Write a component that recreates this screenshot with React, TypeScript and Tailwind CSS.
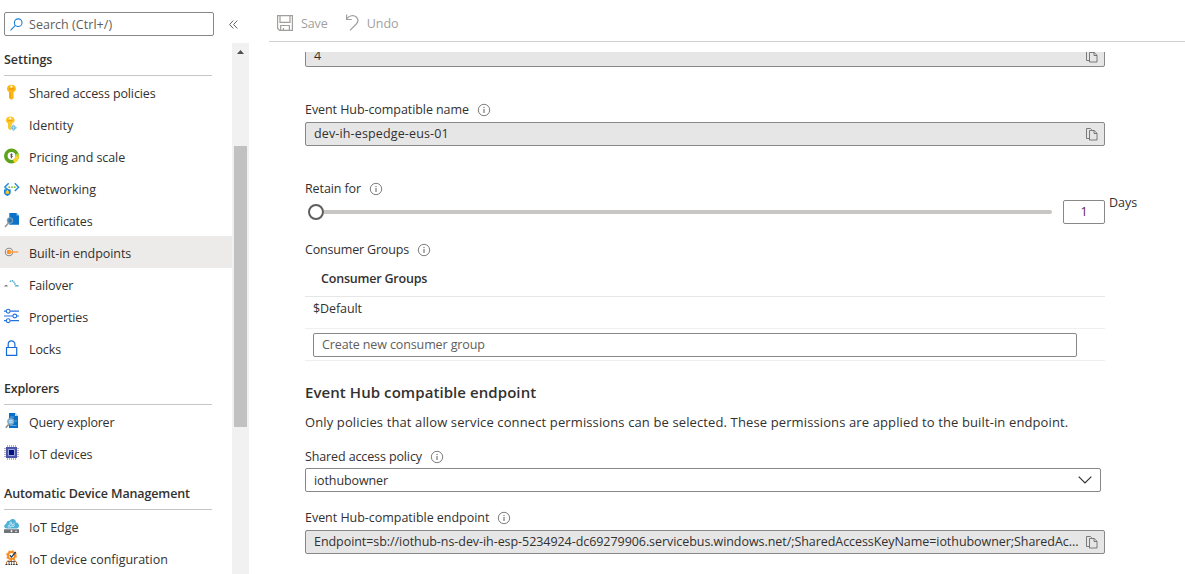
import React from "react";

type IconProps = { children: React.ReactNode };

function Glyph({ children }: IconProps) {
  return (
    <svg viewBox="0 0 16 16" className="h-4 w-4 shrink-0" fill="none">
      {children}
    </svg>
  );
}

const KeyIcon = () => (
  <Glyph>
    <path d="M7.500.8C4.900.8 3 2.300 3 4.700c0 1.500.8 2.500 2.200 3.300v5.900l1.900 1.900h.8l1.700-1.700V8C11 7.200 11.900 6.200 11.900 4.700 11.900 2.300 10 .8 7.500.8Z" fill="#fdb714" />
    <path d="M5.200 8h1.600v7L5.200 13.900Z" fill="#f7a30c" />
    <rect x="4.800" y="4.500" width="5.400" height="1" rx=".5" fill="#f08c00" />
    <circle cx="7.400" cy="2.700" r="1.100" fill="#fff" />
  </Glyph>
);

const IdentityIcon = () => (
  <Glyph>
    <path d="M6.200.5C3.700.5 1.800 2 1.800 4.200c0 1.400.8 2.400 2.200 3v5l1.700 1.800h.8l1.700-1.600-.8-1 .8-1-.8-1 .8-1V7.200c1.600-.7 2.500-1.600 2.500-3C10.700 2 8.600.5 6.200.5Z" fill="#fcc72c" />
    <circle cx="6.200" cy="2.500" r="1" fill="#fff" />
    <rect x="3.800" y="4.200" width="4.800" height=".9" fill="#e89b10" />
    <path d="M9.500 8.200 13.200 11.700 9.500 15.300 5.900 11.700Z" fill="#9ad6ee" />
    <path d="m9.500 9.400 2.400 2.300-2.400 2.300-2.300-2.300Z" fill="#5ba9cf" />
    <path d="M9.500 9.800v4M7.600 11.700h3.900" stroke="#cdebf7" strokeWidth=".6" />
  </Glyph>
);

const PricingIcon = () => (
  <Glyph>
    <circle cx="7.500" cy="8" r="5.700" stroke="#5ea31d" strokeWidth="3.600" />
    <path d="M12.700 5.700A5.700 5.700 0 0 1 13.200 8" stroke="#b4d53a" strokeWidth="3.600" />
    <path d="M13.200 8a5.700 5.700 0 0 1-3.600 5.300" stroke="#f9d42c" strokeWidth="3.600" />
    <path d="M8.600 6.600c-.5-.6-2.100-.6-2.100.3s2 .6 2 1.500-1.600 1-2.200.3M7.500 5.600v4.800" stroke="#444" strokeWidth=".8" />
  </Glyph>
);

const NetworkingIcon = () => (
  <Glyph>
    <path d="M4.700 3.300.8 7.100l2.500 2.500M10.800 3.300l3.800 3.900-3.800 3.900" stroke="#2f8fe0" strokeWidth="1.500" />
    <circle cx="5.200" cy="7.200" r=".9" fill="#76bc2d" />
    <circle cx="8" cy="7.200" r=".9" fill="#76bc2d" />
    <circle cx="10.800" cy="7.200" r=".9" fill="#76bc2d" />
    <path d="M0 9.500q2 0 3.300-1 1.300 1 3.400 1v3q0 2.300-3.400 3.500Q0 14.800 0 12.500Z" fill="#1685da" />
    <path d="M1.700 11.300h3.400v2.500H1.700ZM2.500 11.300v-1q.9-1.300 1.700 0v1" fill="#ffca2b" />
  </Glyph>
);

const CertificateIcon = () => (
  <Glyph>
    <path d="M5.300 1h7.200L15 3.500V12.800H5.300Z" fill="#0a72c8" />
    <path d="M12.500 1v2.500H15Z" fill="#7fc0ee" />
    <path d="m1 15 3.500-4" stroke="#9b9b9b" strokeWidth="1.700" />
    <circle cx="6" cy="8.500" r="2.900" fill="#4b92c6" stroke="#8fa3b0" strokeWidth=".8" />
    <path d="M4.300 8h3.500M4.800 9.600h3M6.200 6.300v4" stroke="#2670a2" strokeWidth=".8" />
  </Glyph>
);

const EndpointIcon = () => (
  <Glyph>
    <circle cx="5" cy="8" r="3.700" stroke="#8d8d8d" strokeWidth="1.100" fill="#f4f3f2" />
    <circle cx="5" cy="8" r="2.300" fill="#ff8c19" />
    <path d="M5 8h9.200" stroke="#ffa64d" strokeWidth="1.600" />
  </Glyph>
);

const FailoverIcon = () => (
  <Glyph>
    <path d="M0 10.500q.3-1 1.200-1 .4-1 1.300-.6 1.200.1 1.300 1.600Z" fill="#777" />
    <path d="M6 5.800Q7.500 3.800 9.500 5.300L11.500 9" stroke="#48a5cd" strokeWidth="1.500" strokeDasharray="1.400 .7" />
    <path d="M11 10.500q.2-2 1.500-1.300 1.800-.4 2.500 1.300Z" fill="#48a5cd" />
  </Glyph>
);

const PropertiesIcon = () => (
  <Glyph>
    <path d="M0 3.200h2.200M6.200 3.200H15M0 8h8.800M12.800 8H15M0 12.700h2.200M6.200 12.700H15" stroke="#2472de" strokeWidth="1.200" />
    <circle cx="4.200" cy="3.200" r="1.900" stroke="#2472de" strokeWidth="1.100" />
    <circle cx="10.800" cy="8" r="1.900" stroke="#2472de" strokeWidth="1.100" />
    <circle cx="4.200" cy="12.700" r="1.900" stroke="#2472de" strokeWidth="1.100" />
  </Glyph>
);

const LockIcon = () => (
  <Glyph>
    <path d="M2.500 7.500h10.200v7.900H2.500ZM4.200 7.500V4.300a3.300 3.300 0 0 1 6.700 0v3.200" stroke="#1668dc" strokeWidth="1.200" />
  </Glyph>
);

const QueryIcon = () => (
  <Glyph>
    <path d="M5 0h6l3 3v12H5Z" fill="#0a6fc5" />
    <path d="M11 0v3h3Z" fill="#bcdff5" />
    <path d="M6 4h4M6 12.500h6.500M10.500 8H13" stroke="#58aadf" strokeWidth="1" />
    <path d="m1.800 14.700 3-3.500" stroke="#8e8e8e" strokeWidth="1.600" />
    <circle cx="6.800" cy="8.500" r="3.200" fill="#71b7e4" stroke="#8e9ca6" />
    <path d="M5 7.700h3.700M5 9.300h3.700" stroke="#dcf0fa" strokeWidth=".8" />
  </Glyph>
);

const ChipIcon = () => (
  <Glyph>
    <path d="M0 3.500h15M0 5.500h15M0 7.500h15M0 9.500h15M0 11.500h15M3.500 0v15M5.500 0v15M7.500 0v15M9.500 0v15M11.500 0v15" stroke="#a0a0a0" strokeWidth=".8" />
    <path d="M2 2h11v11H2Z" fill="#4a55ab" />
    <path d="M4.500 4.500h6v6h-6Z" fill="#00127f" stroke="#aab2e4" strokeWidth=".9" />
  </Glyph>
);

const EdgeIcon = () => (
  <Glyph>
    <path d="M2.700 10.500C-.7 10-.3 6.300 2.200 6 2.300 3.500 4 2.200 5.800 2.800 7.200-.4 12.300.6 12 4.600c3.600-.2 4 5.300.8 5.900Z" fill="#4eb1d6" />
    <path d="m5 8 1.800-3L9 7.500l1.700-3M6 9.500 9 7.500" stroke="#d9f1fa" strokeWidth=".7" />
    <g fill="#4eb1d6" stroke="#e8f7fc" strokeWidth=".7">
      <circle cx="5" cy="8.300" r="1" />
      <circle cx="6.800" cy="5" r="1" />
      <circle cx="9.200" cy="7.500" r="1.100" />
    </g>
    <path d="M0 11h15v4H0Z" fill="#6f7376" />
    <path d="M0 11h15v.8H0Z" fill="#9fa3a6" />
    <path d="M7.500 12v2.200M6.400 13.100h2.200M11 13.300h2" stroke="#fff" strokeWidth=".8" />
  </Glyph>
);

const ConfigIcon = () => (
  <Glyph>
    <circle cx="7.500" cy="5.500" r="4.600" fill="#f78d1e" />
    <circle cx="7.500" cy="5.500" r="4.800" stroke="#f78d1e" strokeWidth="1.200" strokeDasharray="2 1.770" />
    <circle cx="7.500" cy="5.500" r="2.500" fill="#fff" />
    <path d="m5.700 5.200 1.800 1.900L11.700 2" stroke="#17325f" strokeWidth="1.200" />
    <path d="M4.800 10 2.500 12v2.500M10.200 10l2.300 2v2.500M7.500 10.200V15" stroke="#c0682a" strokeWidth=".9" />
    <path d="M3.500 11.500h8M5 11.500v3M10 11.500v3" stroke="#4a3b30" strokeWidth=".8" />
    <path d="M1.500 14.500h2M4.500 14.500h1.500M6.800 14.500h1.500M9.200 14.500h1.500M11.700 14.500h2" stroke="#333" strokeWidth="1" />
  </Glyph>
);

const InfoIcon = () => (
  <svg viewBox="0 0 14 14" className="h-[14px] w-[14px] shrink-0" fill="none">
    <circle cx="7" cy="7" r="5.700" stroke="#605e5c" strokeWidth=".8" />
    <path d="M7 6v4M7 3.900v1.200" stroke="#605e5c" strokeWidth="1" />
  </svg>
);

const CopyIcon = () => (
  <svg viewBox="0 0 12 13" className="h-[13px] w-3 shrink-0" fill="none" stroke="#605e5c" strokeWidth=".8">
    <path d="M3.500 10.500h-3V.5h4l1.300 1.300" />
    <path d="M3.500 2.500h4.700l2.800 2.800v6.700H3.500Z" />
    <path d="M8 2.500v3h3" />
  </svg>
);

type NavItemProps = { icon: React.ReactNode; label: string; track?: string; active?: boolean };

function NavItem({ icon, label, track = "", active = false }: NavItemProps) {
  return (
    <div className={`flex h-8 items-center gap-[9px] pl-1 ${active ? "bg-[#edebe9]" : ""}`}>
      {icon}
      <span className={`pt-[3px] whitespace-nowrap ${track}`}>{label}</span>
    </div>
  );
}

function NavHeading({ label, first = false, track = "" }: { label: string; first?: boolean; track?: string }) {
  return (
    <div className={`ml-1 flex w-[208px] items-end border-b border-[#c8c6c4] pb-[5px] font-semibold whitespace-nowrap ${first ? "h-[33px]" : "h-[41px]"}`}>
      <span className={track}>{label}</span>
    </div>
  );
}

function FieldLabel({ label, className = "", track = "" }: { label: string; className?: string; track?: string }) {
  return (
    <div className={`flex h-5 items-center ${className}`}>
      <span className={`shrink-0 whitespace-nowrap ${track}`}>{label}</span>
      <InfoIcon />
    </div>
  );
}

function ReadOnlyField({ value, className = "", track = "" }: { value: string; className?: string; track?: string }) {
  return (
    <div className={`flex h-6 w-[800px] shrink-0 items-center justify-between rounded-[2px] border border-[#8a8886] bg-[#e6e6e6] pr-1.5 pl-2 ${className}`}>
      <span className={`whitespace-nowrap ${track}`}>{value}</span>
      <CopyIcon />
    </div>
  );
}

export default function App() {
  return (
    <div className="flex h-[574px] w-[1185px] overflow-hidden bg-white font-['Open_Sans',sans-serif] text-[12.5px] leading-5 text-[#323130]">
      <aside className="flex w-[249px] shrink-0 flex-col">
        <div className="flex h-[43px] shrink-0 items-start pt-3 pl-1">
          <div className="flex h-6 w-[210px] items-center gap-1.5 rounded-[2px] border border-[#8a8886] pl-[5px] text-[#605e5c]">
            <svg viewBox="0 0 13 13" className="h-[13px] w-[13px]" fill="none" stroke="#1b80d6" strokeWidth="1.100">
              <circle cx="8.200" cy="4.700" r="3.800" />
              <path d="M5.400 7.400.5 12.300" />
            </svg>
            <span className="pt-0.5 tracking-[0.04px] whitespace-nowrap">Search (Ctrl+/)</span>
          </div>
          <svg viewBox="0 0 9 9" className="mt-2 ml-[15px] h-[9px] w-[9px]" fill="none" stroke="#605e5c" strokeWidth="1">
            <path d="M4.300.5.600 4.500l3.700 4M8.300.5 4.600 4.500l3.700 4" />
          </svg>
        </div>
        <div className="flex min-h-0 flex-1">
          <nav className="w-[232px] shrink-0 overflow-hidden">
            <NavHeading label="Settings" first />
            <NavItem icon={<KeyIcon />} label="Shared access policies" track="tracking-[-0.12px]" />
            <NavItem icon={<IdentityIcon />} label="Identity" />
            <NavItem icon={<PricingIcon />} label="Pricing and scale" track="tracking-[-0.06px]" />
            <NavItem icon={<NetworkingIcon />} label="Networking" track="tracking-[-0.05px]" />
            <NavItem icon={<CertificateIcon />} label="Certificates" track="tracking-[-0.15px]" />
            <NavItem icon={<EndpointIcon />} label="Built-in endpoints" track="tracking-[-0.06px]" active />
            <NavItem icon={<FailoverIcon />} label="Failover" track="tracking-[-0.18px]" />
            <NavItem icon={<PropertiesIcon />} label="Properties" track="tracking-[-0.15px]" />
            <NavItem icon={<LockIcon />} label="Locks" track="tracking-[-0.1px]" />
            <NavHeading label="Explorers" track="tracking-[-0.2px]" />
            <NavItem icon={<QueryIcon />} label="Query explorer" track="tracking-[-0.2px]" />
            <NavItem icon={<ChipIcon />} label="IoT devices" track="tracking-[-0.06px]" />
            <NavHeading label="Automatic Device Management" track="tracking-[-0.12px]" />
            <NavItem icon={<EdgeIcon />} label="IoT Edge" />
            <NavItem icon={<ConfigIcon />} label="IoT device configuration" track="tracking-[-0.02px]" />
          </nav>
          <div className="flex w-[17px] flex-col items-center bg-[#f1f1f1]">
            <svg viewBox="0 0 7 4" className="mt-[7px] h-1 w-[7px]">
              <path d="M0 4 3.500 0 7 4Z" fill="#505050" />
            </svg>
            <div className="mt-[92px] h-[281px] w-[13px] bg-[#c1c1c1]" />
          </div>
        </div>
      </aside>

      <main className="flex min-w-0 flex-1 flex-col">
        <div className="ml-5 flex h-[42px] shrink-0 items-center border-b border-[#d2d0ce] pt-1 pl-2 text-[#a19f9d]">
          <svg viewBox="0 0 16 16" className="h-4 w-4" fill="none" stroke="#a19f9d" strokeWidth="1.200">
            <path d="M.6.600h14.800v14.800H2.600l-2-2Z" />
            <path d="M3 .6v6.800h10V.6M3.700 15.400v-4.900h8.700v4.900M6.500 15.400v-2.500" />
          </svg>
          <span className="ml-2 pt-[3px] tracking-[-0.1px]">Save</span>
          <svg viewBox="0 0 14 17" className="ml-[17px] h-[17px] w-[14px]" fill="none" stroke="#a19f9d" strokeWidth="1.200">
            <path d="M1.600.5v5h5.200M1.600 5.200C4 1.500 8.500.500 11.300 3c2.200 2.200 2 4.800 0 7L5 16.300" />
          </svg>
          <span className="ml-2 pt-[3px]">Undo</span>
        </div>
        <div className="mt-2.5 ml-14 flex min-h-0 flex-1 flex-col overflow-hidden">
          <ReadOnlyField value="4" className="-mt-[9px] pt-0.5" />

          <FieldLabel label="Event Hub-compatible name" className="mt-[33px] gap-2" track="tracking-[-0.07px]" />
          <ReadOnlyField value="dev-ih-espedge-eus-01" className="mt-0.5" track="tracking-[0.14px]" />

          <FieldLabel label="Retain for" className="mt-[33px] gap-2" track="tracking-[-0.1px]" />
          <div className="mt-px flex h-6 shrink-0 items-center">
            <div className="ml-[3px] flex w-[744px] items-center">
              <div className="h-4 w-4 shrink-0 rounded-full border-2 border-[#605e5c] bg-white" />
              <div className="h-1 flex-1 rounded-r-full bg-[#c8c6c4]" />
            </div>
            <div className="ml-[11px] flex h-6 w-[42px] items-center justify-center rounded-[2px] border border-[#8a8886] text-[#5c1a4c]">1</div>
            <span className="ml-1 self-start leading-[6px]">Days</span>
          </div>

          <FieldLabel label="Consumer Groups" className="mt-4 gap-2" track="tracking-[-0.18px]" />
          <div className="-mt-px w-[800px] shrink-0">
            <div className="flex h-[38px] items-center border-b border-[#e6e6e6] pt-0.5 pl-4 font-semibold">
              <span className="tracking-[-0.2px]">Consumer Groups</span>
            </div>
            <div className="flex h-8 items-center border-b border-[#f0efee] pb-2 pl-2">
              <span className="tracking-[-0.1px]">$Default</span>
            </div>
            <div className="flex h-8 items-center border-b border-[#f0efee] pl-2">
              <div className="flex h-6 w-[764px] items-center rounded-[2px] border border-[#8a8886] pl-2 text-[#605e5c]">
                <span className="tracking-[-0.12px]">Create new consumer group</span>
              </div>
            </div>
          </div>

          <h2 className="mt-[21px] h-5 text-[15px] font-semibold tracking-[0.07px] whitespace-nowrap">Event Hub compatible endpoint</h2>
          <p className="mt-2.5 h-5 text-[13px] tracking-[0.12px] whitespace-nowrap">
            Only policies that allow service connect permissions can be selected. These permissions are applied to the built-in endpoint.
          </p>

          <FieldLabel label="Shared access policy" className="mt-[15px] gap-2" track="tracking-[-0.12px]" />
          <div className="mt-px flex h-6 w-[796px] shrink-0 items-center justify-between rounded-[2px] border border-[#8a8886] pr-2 pl-2">
            <span className="pt-0.5 tracking-[-0.1px]">iothubowner</span>
            <svg viewBox="0 0 14 8" className="h-2 w-3.5" fill="none" stroke="#323130" strokeWidth="1.200">
              <path d="m.7.700 6.300 6.300L13.300.700" />
            </svg>
          </div>

          <FieldLabel label="Event Hub-compatible endpoint" className="mt-4 gap-2" track="tracking-[-0.03px]" />
          <ReadOnlyField
            value="Endpoint=sb://iothub-ns-dev-ih-esp-5234924-dc69279906.servicebus.windows.net/;SharedAccessKeyName=iothubowner;SharedAc..."
            className="mt-0.5"
            track="tracking-[-0.058px]"
          />
        </div>
      </main>
    </div>
  );
}
